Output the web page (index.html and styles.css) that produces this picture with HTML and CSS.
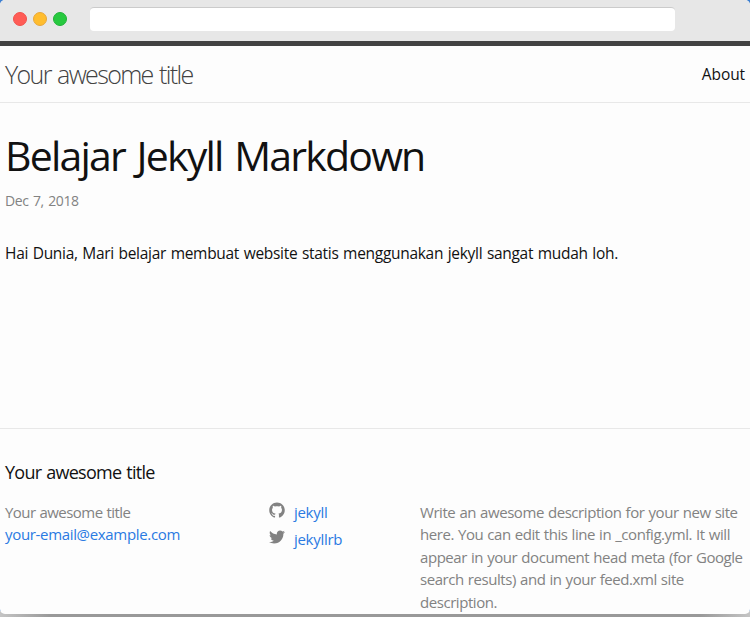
FILE: index.html
```html
<!DOCTYPE html>
<html lang="id">
<head>
<meta charset="utf-8">
<title>Belajar Jekyll Markdown</title>
<link rel="stylesheet" href="styles.css">
</head>
<body>
<div class="window">
  <div class="toolbar">
    <span class="dot close"></span><span class="dot minimize"></span><span class="dot expand"></span>
    <div class="address"></div>
  </div>
  <header class="site-header">
    <a class="site-title">Your awesome title</a>
    <nav class="page-link">About</nav>
  </header>
  <main class="post">
    <h1 class="post-title">Belajar Jekyll Markdown</h1>
    <p class="post-meta">Dec 7, 2018</p>
    <p class="post-content">Hai Dunia, Mari belajar membuat website statis menggunakan jekyll sangat mudah loh.</p>
  </main>
  <footer class="site-footer">
    <h2 class="footer-heading">Your awesome title</h2>
    <div class="footer-cols">
      <ul class="contact">
        <li class="name">Your awesome title</li>
        <li><a class="email">your-email@example.com</a></li>
      </ul>
      <ul class="social">
        <li><svg class="icon" viewBox="0 0 16 16"><path d="M7.999,0.431c-4.285,0-7.76,3.474-7.76,7.761c0,3.428,2.223,6.337,5.307,7.363c0.388,0.071,0.53-0.168,0.53-0.374c0-0.184-0.007-0.672-0.01-1.32c-2.159,0.469-2.614-1.04-2.614-1.04c-0.353-0.896-0.862-1.135-0.862-1.135c-0.705-0.481,0.053-0.472,0.053-0.472c0.779,0.055,1.189,0.8,1.189,0.8c0.692,1.186,1.816,0.843,2.258,0.645c0.071-0.502,0.271-0.843,0.493-1.037C4.86,11.425,3.049,10.76,3.049,7.786c0-0.847,0.302-1.54,0.799-2.082C3.768,5.507,3.501,4.718,3.924,3.65c0,0,0.652-0.209,2.134,0.796C6.677,4.273,7.34,4.187,8,4.184c0.659,0.003,1.323,0.089,1.943,0.261c1.482-1.004,2.132-0.796,2.132-0.796c0.423,1.068,0.157,1.857,0.077,2.054c0.497,0.542,0.798,1.235,0.798,2.082c0,2.981-1.814,3.637-3.543,3.829c0.279,0.24,0.527,0.713,0.527,1.437c0,1.037-0.01,1.874-0.01,2.129c0,0.208,0.14,0.449,0.534,0.373c3.081-1.028,5.302-3.935,5.302-7.362C15.76,3.906,12.285,0.431,7.999,0.431z"/></svg><a>jekyll</a></li>
        <li><svg class="icon" viewBox="0 0 16 16"><path d="M15.969,3.058c-0.586,0.26-1.217,0.436-1.878,0.515c0.675-0.405,1.194-1.045,1.438-1.809c-0.632,0.375-1.332,0.647-2.076,0.793c-0.596-0.636-1.446-1.033-2.387-1.033c-1.806,0-3.27,1.464-3.27,3.27c0,0.256,0.029,0.506,0.085,0.745C5.163,5.404,2.753,4.102,1.14,2.124C0.859,2.607,0.698,3.168,0.698,3.767c0,1.134,0.577,2.135,1.455,2.722C1.616,6.472,1.112,6.325,0.671,6.08c0,0.014,0,0.027,0,0.041c0,1.584,1.127,2.906,2.623,3.206C3.02,9.402,2.731,9.442,2.433,9.442c-0.211,0-0.416-0.021-0.615-0.059c0.416,1.299,1.624,2.245,3.055,2.271c-1.119,0.877-2.529,1.4-4.061,1.4c-0.264,0-0.524-0.015-0.78-0.046c1.447,0.928,3.166,1.469,5.013,1.469c6.015,0,9.304-4.983,9.304-9.304c0-0.142-0.003-0.283-0.009-0.423C14.976,4.29,15.531,3.714,15.969,3.058z"/></svg><a>jekyllrb</a></li>
      </ul>
      <p class="description">Write an awesome description for your new site<br>here. You can edit this line in _config.yml. It will<br>appear in your document head meta (for Google<br>search results) and in your feed.xml site<br>description.</p>
    </div>
  </footer>
</div>
</body>
</html>
```
FILE: styles.css
```css
* { box-sizing: border-box; margin: 0; padding: 0; }
body {
  height: 617px;
  overflow: hidden;
  background: linear-gradient(#3d7fd0, #3d7fd0) 0 0 / 100% 611px no-repeat, linear-gradient(90deg, #c4c4c4, #999 50px, #999 700px, #c4c4c4);
  font-family: "Open Sans", "Noto Sans", sans-serif;
  color: #111;
}
.window {
  height: 614px;
  display: flex;
  flex-direction: column;
  background: #fdfdfd;
  border-radius: 5px;
  overflow: hidden;
  white-space: nowrap;
}
.toolbar {
  height: 46px;
  flex: none;
  display: flex;
  align-items: flex-start;
  background: #e7e7e7;
  border-bottom: 5px solid #424242;
  padding: 7px 0 0 13px;
}
.dot { width: 14px; height: 14px; border-radius: 50%; margin: 5px 6px 0 0; border: 1px solid; }
.close { background: #ff5c56; border-color: #f2514c; }
.minimize { background: #ffbd2e; border-color: #e8a73a; }
.expand { background: #27c93f; border-color: #20b238; }
.address { width: 585px; height: 24px; margin-left: 17px; background: #fff; border-radius: 4px; border-top: 1px solid #cbcbcb; }
.site-header {
  height: 57px;
  flex: none;
  display: flex;
  justify-content: space-between;
  padding: 0 5px;
  border-bottom: 1px solid #e8e8e8;
}
.site-title { font-size: 25px; font-weight: 300; line-height: 57px; letter-spacing: -1.65px; word-spacing: 1.5px; color: #424242; }
.page-link { font-size: 15.5px; line-height: 57px; letter-spacing: -.1px; }
.post { height: 325px; padding: 24px 5px 0; flex: none; }
.post-title { font-size: 41px; font-weight: 400; line-height: 56px; letter-spacing: -1.8px; word-spacing: 2.8px; }
.post-meta { font-size: 14px; line-height: 20px; margin-top: 8px; letter-spacing: -.4px; word-spacing: 1.2px; color: #828282; }
.post-content { font-size: 15.5px; line-height: 24px; margin-top: 30px; letter-spacing: -.3px; word-spacing: .9px; }
.site-footer { flex: 1; border-top: 1px solid #e8e8e8; padding: 30px 5px 0; }
.footer-heading { font-size: 18px; font-weight: 400; line-height: 27px; letter-spacing: -.74px; word-spacing: 1px; }
.footer-cols { display: grid; grid-template-columns: 264px 151px 1fr; margin-top: 15px; font-size: 15px; line-height: 22.4px; letter-spacing: -.44px; word-spacing: .6px; color: #828282; }
.footer-cols ul { list-style: none; }
.footer-cols a { color: #2a7ae2; }
.footer-cols .email { letter-spacing: -.33px; }
.contact .name { letter-spacing: -.55px; }
.contact li { height: 22px; line-height: 22px; }
.social li { display: flex; height: 27px; letter-spacing: -.3px; }
.icon { width: 16px; height: 16px; margin: 1px 9px 0 0; fill: #828282; }
```
